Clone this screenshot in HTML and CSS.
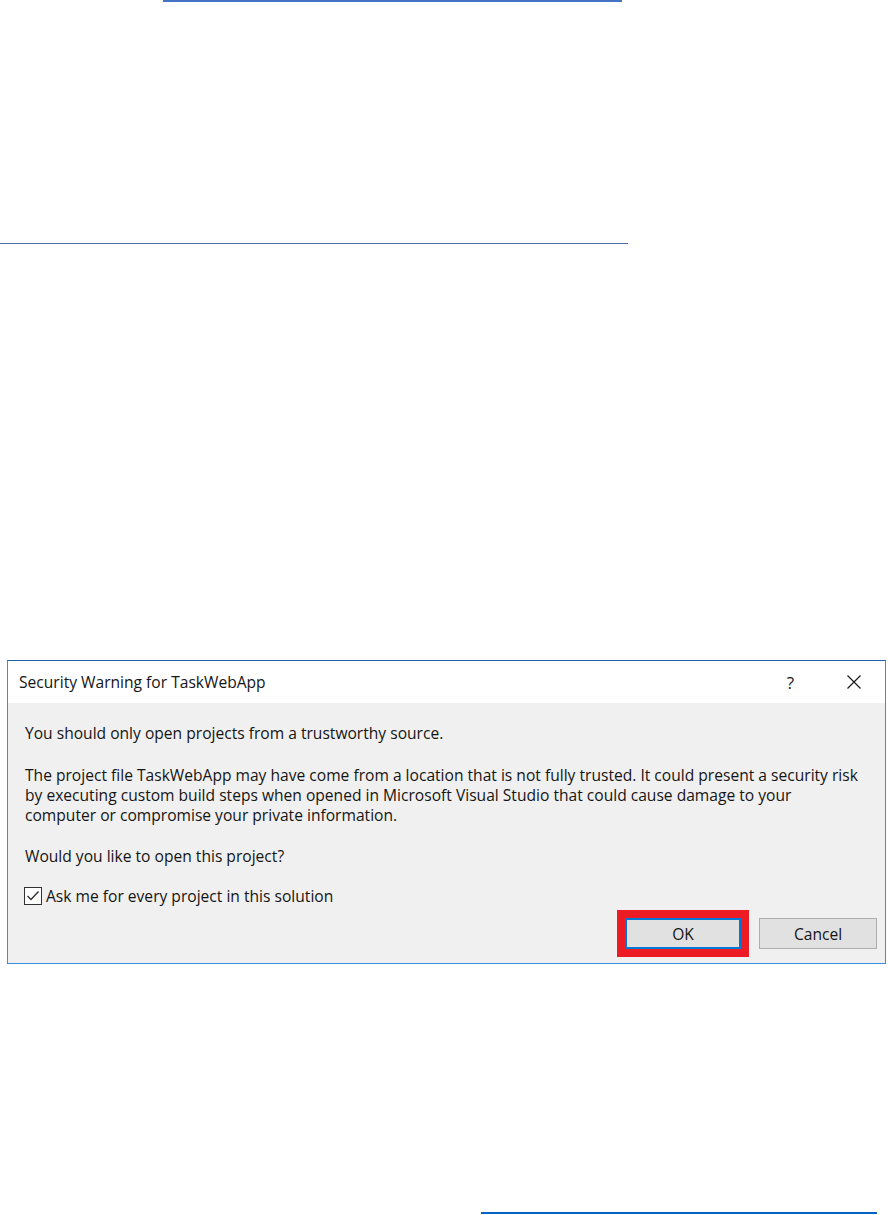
FILE: index.html
```html
<!DOCTYPE html>
<html lang="en">
<head>
    <meta charset="UTF-8">
    <title>Security Warning for TaskWebApp</title>
    <link rel="stylesheet" href="styles.css">
</head>
<body>
    <div class="rule rule-top"></div>
    <div class="rule rule-mid"></div>

    <!-- Dialog -->
    <div class="dialog">
        <div class="title-bar">
            <span class="title">Security Warning for TaskWebApp</span>
            <span class="help">?</span>
            <svg class="close" width="16" height="16" viewBox="0 0 16 16">
                <path d="M1.5 1.5 L14.5 14.5 M14.5 1.5 L1.5 14.5" stroke="#1a1a1a" stroke-width="1.2" fill="none"/>
            </svg>
        </div>
        <div class="dialog-body">
            <p class="p-first">You should only open projects from a trustworthy source.</p>
            <p class="p-warn">The project file TaskWebApp may have come from a location that is not fully trusted. It could present a security risk<br>by executing custom build steps when opened in Microsoft Visual Studio that could cause damage to your<br>computer or compromise your private information.</p>
            <p class="p-ask">Would you like to open this project?</p>
            <label class="check-row">
                <svg class="checkbox" width="18" height="18" viewBox="0 0 18 18">
                    <rect x="0.5" y="0.5" width="17" height="17" fill="#fff" stroke="#333" stroke-width="1"/>
                    <path d="M3.5 9 L7 12.5 L14.5 4.5" stroke="#333" stroke-width="1.4" fill="none"/>
                </svg>
                <span>Ask me for every project in this solution</span>
            </label>
            <div class="buttons">
                <div class="highlight">
                    <button class="btn btn-ok">OK</button>
                </div>
                <button class="btn btn-cancel">Cancel</button>
            </div>
        </div>
    </div>

    <div class="rule rule-bottom"></div>
</body>
</html>
```

FILE: styles.css
```css
body {
    margin: 0;
    height: 1215px;
    background: #fff;
    font-family: "Open Sans", "Noto Sans", sans-serif;
    overflow: hidden;
}
.rule {
    display: block;
}
.rule-top {
    margin-left: 163px;
    width: 459px;
    height: 2px;
    background: #4472c4;
}
.rule-mid {
    margin-top: 241px;
    width: 628px;
    height: 1px;
    background: #4a6cad;
}
.rule-bottom {
    margin-top: 248px;
    margin-left: 481px;
    width: 396px;
    height: 2px;
    background: #0563c1;
}

/* Dialog */
.dialog {
    margin-top: 416px;
    margin-left: 7px;
    width: 877px;
    border: 1px solid #3a8ee2;
    border-top-color: #2460a8;
    color: #151515;
    font-size: 15.6px;
}
.title-bar {
    display: flex;
    align-items: center;
    height: 42px;
    background: #fff;
    padding-left: 11px;
}
.title {
    flex: 1;
    font-size: 15.6px;
}
.help {
    font-size: 17px;
    margin-right: 52px;
}
.close {
    margin-right: 23px;
}
.dialog-body {
    background: #f0f0f0;
    padding: 20px 8px 6px 17px;
    line-height: 20px;
}
.dialog-body p {
    margin: 0;
    white-space: nowrap;
}
.p-warn {
    margin-top: 22px !important;
}
.p-ask {
    margin-top: 21px !important;
}
.check-row {
    display: flex;
    align-items: center;
    gap: 4px;
    margin-top: 20px;
    height: 20px;
    margin-left: -1px;
}
.buttons {
    display: flex;
    justify-content: flex-end;
    align-items: center;
    gap: 10px;
    margin-top: 4px;
}
.highlight {
    border: 8px solid #ed1c24;
}
.btn {
    display: block;
    height: 31px;
    font-family: inherit;
    font-size: 15.6px;
    color: #151515;
    background: #e1e1e1;
    border: 1px solid #adadad;
    padding: 0;
}
.btn-ok {
    width: 116px;
    border: 2px solid #0078d7;
}
.btn-cancel {
    width: 118px;
}
```
